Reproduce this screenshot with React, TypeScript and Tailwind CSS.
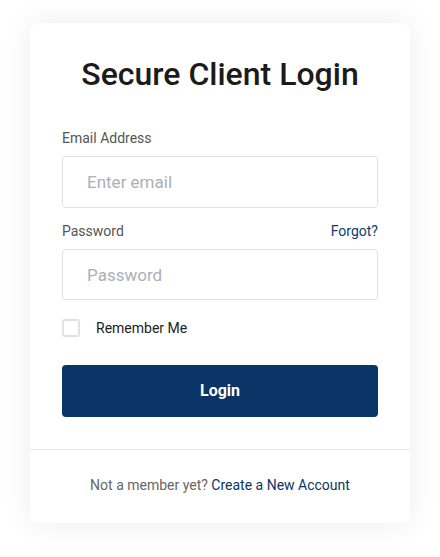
import { useState } from 'react';

export default function App() {
  const [remember, setRemember] = useState(false);

  return (
    <div className="min-h-[557px] bg-white pt-[23px] font-['Roboto','Liberation_Sans',sans-serif]">
      <div className="mx-auto w-[380px] rounded-lg bg-white shadow-[0_0_30px_rgba(0,0,0,0.08)]">
        <div className="px-8 pt-8 pb-8">
          <h1 className="text-center text-[32px] leading-[1.2] font-medium text-[#1b1b1b]">
            Secure Client Login
          </h1>

          <div className="mt-[35px]">
            <label className="block text-[14px] leading-5 text-[#555] mb-2">Email Address</label>
            <input
              type="email"
              placeholder="Enter email"
              className="block w-full h-[52px] rounded border border-[#e0e0e0] px-6 text-[17px] text-[#333] placeholder:text-[#aab0b8] outline-none"
            />
          </div>

          <div className="mt-[13px]">
            <div className="flex items-center justify-between mb-2">
              <label className="text-[14px] leading-5 text-[#555]">Password</label>
              <a href="#" className="text-[14px] leading-5 text-[#0d3c72]">Forgot?</a>
            </div>
            <input
              type="password"
              placeholder="Password"
              className="block w-full h-[51px] rounded border border-[#e0e0e0] px-6 text-[17px] text-[#333] placeholder:text-[#aab0b8] outline-none"
            />
          </div>

          <label className="mt-[18px] flex items-center cursor-pointer">
            <span
              onClick={() => setRemember(!remember)}
              className={`w-[18px] h-[18px] rounded-[3px] border-2 ${remember ? 'border-[#0a3566] bg-[#0a3566]' : 'border-[#e2e2e2] bg-white'}`}
            />
            <span className="ml-[16px] text-[14px] leading-5 text-[#222]">Remember Me</span>
          </label>

          <button className="mt-[27px] block w-full h-[52px] rounded bg-[#0a3566] text-white text-[16px] font-bold">
            Login
          </button>
        </div>

        <div className="border-t border-[#e9e9e9] pt-[25px] pb-7 text-center text-[14px] leading-5 text-[#666]">
          Not a member yet?{' '}
          <a href="#" className="text-[#0d3566]">Create a New Account</a>
        </div>
      </div>
    </div>
  );
}
